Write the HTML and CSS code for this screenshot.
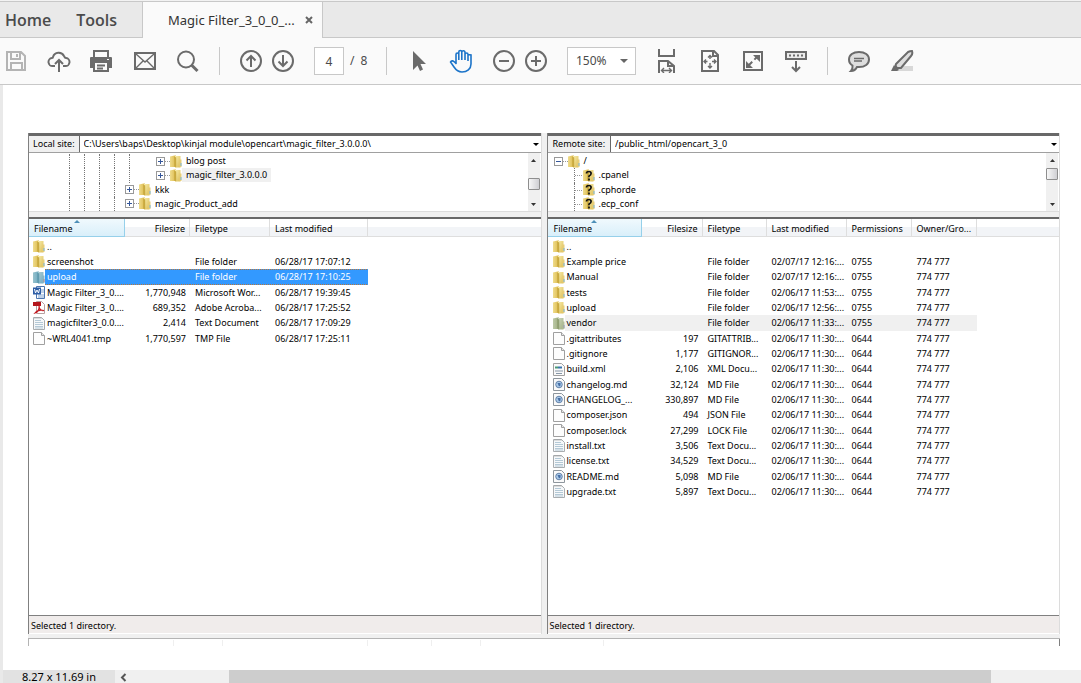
FILE: index.html
```
<!DOCTYPE html>
<html lang="en">
<head>
<meta charset="utf-8">
<title>Magic Filter_3_0_0_...</title>
<link rel="stylesheet" href="styles.css">
</head>
<body>
<svg class="sprite" aria-hidden="true">
  <defs>
    <linearGradient id="gold" x1="0" x2="1" y1="0" y2="1"><stop offset="0" stop-color="#f8edac"/><stop offset="1" stop-color="#dcbd55"/></linearGradient>
    <linearGradient id="goldside" x1="0" x2="1"><stop offset="0" stop-color="#efdc8c"/><stop offset="1" stop-color="#dcb94b"/></linearGradient>
  </defs>
  <symbol id="folder" viewBox="0 0 12 13">
    <path d="M0 1.500 4.500.500h1.500v11.500H0z" fill="url(#goldside)"/>
    <path d="M5 1h5.500v11.500H5z" fill="url(#gold)"/>
    <path d="M4.200 1.500 6.200 2.500v10L4.200 11.500z" fill="#c9a93f"/>
    <path d="M9.500 4.500h2v7.500h-2z" fill="#e6cd78"/>
    <path d="M10.500 8h1v3h-1z" fill="#7bb6d9"/>
  </symbol>
  <symbol id="unknown" viewBox="0 0 12 13">
    <use href="#folder"/>
    <path d="M3.500 4.500q0-2 2.300-2t2.300 2q0 1.300-2.100 2.600V8.300M6 9.500v2" fill="none" stroke="#111" stroke-width="1.700"/>
  </symbol>
  <symbol id="blank" viewBox="0 0 12 13">
    <path d="M.5.5h8l3 3v9H.5z" fill="#fdfdfd" stroke="#a0a0a0"/><path d="M8.500.5v3h3" fill="#e8e8e8" stroke="#a0a0a0"/>
  </symbol>
  <symbol id="text" viewBox="0 0 12 13">
    <path d="M.5.5h8l3 3v9H.5z" fill="#f6f8fa" stroke="#a9adb0"/><path d="M2 3.500h6M2 5.500h8M2 7.500h8M2 9.500h8M2 11h8" stroke="#b4c9d6"/>
    <path d="M2 0v2M4 0v2M6 0v2M8 0v2" stroke="#9a9a9a" stroke-width=".6"/>
  </symbol>
  <symbol id="md" viewBox="0 0 12 13">
    <path d="M.5.5h8l3 3v9H.5z" fill="#fafafa" stroke="#8e969d"/><circle cx="6" cy="6.500" r="3.300" fill="#a9c9e8" stroke="#6583aa"/><path d="M4.500 5h3v2.500l-1.500 1z" fill="#446da5"/>
  </symbol>
  <symbol id="xml" viewBox="0 0 12 13">
    <path d="M.5.5h8l3 3v9H.5z" fill="#fafafa" stroke="#a0a0a0"/><path d="M2 4.500h3" stroke="#4a9a78" stroke-width="2"/><path d="M5 4.500h4" stroke="#3974ad" stroke-width="2"/><path d="M2 8h8M3 10.500h6" stroke="#8797a8"/>
  </symbol>
  <symbol id="word" viewBox="0 0 12 13">
    <path d="M3.500.5h8v12h-8z" fill="#fff" stroke="#4c75ae"/><path d="M8 4h3M8 6h3M5 9h6M5 11h6" stroke="#7fa2d0"/><path d="M0 1.500h8v7H0z" fill="#2f5ea6"/><path d="m1.500 3 1 4L4 4l1.500 3 1-4" stroke="#fff" fill="none"/>
  </symbol>
  <symbol id="pdf" viewBox="0 0 12 13">
    <path d="M3.500.5h5l3 3v9h-8z" fill="#fff" stroke="#b7a0a0"/><path d="M0 1h8v4H0z" fill="#b3151c"/><path d="M2 12c3-1 4.500-4 4-7.500C6 8 8 10 11 9.500 7.500 8.500 4 9.500 2 12z" fill="none" stroke="#c21920" stroke-width="1.200"/>
  </symbol>
</svg>

<header class="tabs">
  <nav class="tabs-main"><button class="tab">Home</button><button class="tab">Tools</button></nav>
  <div class="doc-tab"><span>Magic Filter_3_0_0_...</span>
    <button class="close" aria-label="Close tab"><svg width="8" height="8" viewBox="0 0 8 8"><path d="m1 1 6 6M7 1 1 7" stroke="#666" stroke-width="2"/></svg></button>
  </div>
</header>

<div class="toolbar">
  <button class="tool faded" aria-label="Save"><svg viewBox="0 0 24 24"><path d="M3 3h14l4 4v14H3zM7 3v7h9V3M7 21v-7h11v7M13 5v3"/></svg></button>
  <button class="tool" aria-label="Upload"><svg viewBox="0 0 24 24"><path d="M8 17H6a4 4 0 0 1-1-8c1 0 1-.5 1-1a6 6 0 0 1 11-1c1 1 0 2 2 2a4 4 0 0 1-1 8h-2M12 23V11M8 15l4-4 4 4"/></svg></button>
  <button class="tool" aria-label="Print"><svg viewBox="0 0 24 24"><path d="M4 8V2h14v6"/><path class="fill" d="M0 9q0-1 1-1h20q1 0 1 1v10h-3v-5H3v5H0z"/><path d="M4 13h14v9H4zM7 16.500h8M7 19.500h6" fill="#fafafa"/><path d="M17 10.500h2" stroke="#fafafa" stroke-width="1"/></svg></button>
  <button class="tool" aria-label="Email"><svg viewBox="0 0 24 24"><path d="M2 4h20v16H2z"/><path class="thin" d="m3 5 9 8 9-8M3 19l7-7M21 19l-7-7"/></svg></button>
  <button class="tool" aria-label="Search"><svg viewBox="0 0 24 24"><circle cx="10" cy="10.500" r="8"/><path d="m15.500 16 6 6" stroke-width="3"/></svg></button>
  <span class="sep"></span>
  <div class="pair">
    <button class="tool" aria-label="Previous page"><svg viewBox="0 0 24 24"><circle cx="12" cy="12" r="10"/><path d="M12 18V7M7.500 11.500 12 7l4.500 4.500"/></svg></button>
    <button class="tool" aria-label="Next page"><svg viewBox="0 0 24 24"><circle cx="12" cy="12" r="10"/><path d="M12 6v11M7.500 12.500 12 17l4.500-4.500"/></svg></button>
  </div>
  <div class="pages"><input class="page-no" aria-label="Page number" value="4"><span>/</span><span>8</span></div>
  <span class="sep"></span>
  <button class="tool" aria-label="Select"><svg viewBox="0 0 24 24"><path class="fill" d="M7 2v19l4.500-4.500L14 22l3-1.500-2.500-5.500H20z"/></svg></button>
  <button class="tool active" aria-label="Pan"><svg viewBox="0 0 24 24"><path d="M7 14V5.500q0-1.500 1.300-1.500t1.500 1.500V11M9.800 11V3q0-1.500 1.500-1.500T12.800 3v8M12.800 11V3q0-1.300 1.600-1.300T16 3.500V11M16 11V5.500Q16 4 17.500 4T19 5.500L22 6v9c0 5-4 8-9 8-4 0-6-2-8-5l-3.500-5c1-2 3-1 4 0l2 2M19 5.500V12" stroke-width="1.600"/></svg></button>
  <div class="pair">
    <button class="tool" aria-label="Zoom out"><svg viewBox="0 0 24 24"><circle cx="12" cy="12" r="10"/><path d="M7 12h10"/></svg></button>
    <button class="tool" aria-label="Zoom in"><svg viewBox="0 0 24 24"><circle cx="12" cy="12" r="10"/><path d="M7 12h10M12 7v10"/></svg></button>
  </div>
  <div class="drop zoom"><select aria-label="Zoom"><option>150%</option></select><svg class="caret" viewBox="0 0 8 4"><path d="M0 0h8L4 4z"/></svg></div>
  <button class="tool" aria-label="Fit width"><svg viewBox="0 0 24 24"><path d="M4 0v7h15V0M4 24V12h9l6 5v7M13 12v5h6"/><path class="thin" d="M7 21.500h9M9 19l-2.500 2.500L9 24M14 19l2.500 2.500L14 24"/></svg></button>
  <button class="tool" aria-label="Fit page"><svg viewBox="0 0 24 24"><path d="M4 2h12l4 4v16H4zM15 2v5h5"/><path class="thin" d="M12 7v3M12 14v4M6.500 12.500h3M14 12.500h4M10 8.500l2-2 2 2M10 17l2 2 2-2M8 10.500l-2 2 2 2M16 10.500l2 2-2 2"/></svg></button>
  <button class="tool" aria-label="Full screen"><svg viewBox="0 0 24 24"><path d="M3 3h18v18H3z"/><path d="m7 17 10-10" stroke-dasharray="6 3"/><path class="fill" d="M12 6h7v7zM5 12v7h7z"/></svg></button>
  <button class="tool" aria-label="Reading tools"><svg viewBox="0 0 24 24"><path d="M2 3h20v7H2z" fill="#ececec"/><path d="M5 6.500h14" stroke-dasharray="2 2"/><path d="M12 12v10M8 18l4 4 4-4"/></svg></button>
  <span class="sep"></span>
  <button class="tool" aria-label="Comment"><svg viewBox="0 0 24 24"><path d="M12 3c6 0 10 3 10 7.500S18 18 12 18h-2c-1 2-3 4-6 4q2-2 1.500-5.500C3 15 2 13 2 10.500 2 6 6 3 12 3z" fill="#dedede"/><path class="thin" d="M7 9.500h10M7 12h8"/></svg></button>
  <button class="tool" aria-label="Highlight"><svg viewBox="0 0 24 24"><path d="M8 17h15v5H4z" style="fill:#d8d8d8;stroke:none"/><path d="M6 15 18 3q2-1 4-1 1 3-1 5L11 19H7q-2-2-1-4z" fill="#dedede"/><path class="fill" d="m4 16 5 5-2 1H1z"/></svg></button>
</div>

<main class="document">
  <div class="panes">
    <section class="pane">
      <div class="site"><label for="local">Local site:</label><div class="drop"><select id="local"><option>C:\Users\baps\Desktop\kinjal module\opencart\magic_filter_3.0.0.0\</option></select><svg class="caret" viewBox="0 0 8 4"><path d="M0 0h8L4 4z"/></svg></div></div>
      <div class="tree">
        <ul class="nodes local">
          <li><i></i><i></i><i></i><i></i><i></i><i class="none"></i><button class="expand plus" aria-label="Expand"></button><b></b><svg class="icon"><use href="#folder"/></svg><span>blog post</span></li>
          <li><i></i><i></i><i></i><i></i><i></i><i class="none"></i><button class="expand plus" aria-label="Expand"></button><b></b><svg class="icon"><use href="#folder"/></svg><span class="current">magic_filter_3.0.0.0</span></li>
          <li><i></i><i></i><i></i><i></i><button class="expand plus" aria-label="Expand"></button><b></b><svg class="icon"><use href="#folder"/></svg><span>kkk</span></li>
          <li><i></i><i></i><i></i><i></i><button class="expand plus" aria-label="Expand"></button><b></b><svg class="icon"><use href="#folder"/></svg><span>magic_Product_add</span></li>
        </ul>
        <div class="scroll"><svg viewBox="0 0 5 3"><path d="M0 3h5L2.500 0z"/></svg><span class="thumb mid"></span><svg viewBox="0 0 5 3"><path d="M0 0h5L2.500 3z"/></svg></div>
      </div>
      <div class="list">
        <table>
          <colgroup><col class="w96"><col class="w65"><col class="w80"><col class="w98"><col></colgroup>
          <thead><tr><th class="sorted">Filename</th><th class="num">Filesize</th><th>Filetype</th><th>Last modified</th><th></th></tr></thead>
          <tbody>
            <tr><td><div class="name"><svg class="icon"><use href="#folder"/></svg><span>..</span></div></td><td></td><td></td><td></td><td></td></tr>
            <tr><td><div class="name"><svg class="icon"><use href="#folder"/></svg><span>screenshot</span></div></td><td></td><td>File folder</td><td>06/28/17 17:07:12</td><td></td></tr>
            <tr class="selected"><td><div class="name"><svg class="icon"><use href="#folder"/></svg><span>upload</span></div></td><td></td><td>File folder</td><td>06/28/17 17:10:25</td><td></td></tr>
            <tr><td><div class="name"><svg class="icon"><use href="#word"/></svg><span>Magic Filter_3_0....</span></div></td><td class="num">1,770,948</td><td>Microsoft Wor...</td><td>06/28/17 19:39:45</td><td></td></tr>
            <tr><td><div class="name"><svg class="icon"><use href="#pdf"/></svg><span>Magic Filter_3_0....</span></div></td><td class="num">689,352</td><td>Adobe Acroba...</td><td>06/28/17 17:25:52</td><td></td></tr>
            <tr><td><div class="name"><svg class="icon"><use href="#text"/></svg><span>magicfilter3_0.0....</span></div></td><td class="num">2,414</td><td>Text Document</td><td>06/28/17 17:09:29</td><td></td></tr>
            <tr><td><div class="name"><svg class="icon"><use href="#blank"/></svg><span>~WRL4041.tmp</span></div></td><td class="num">1,770,597</td><td>TMP File</td><td>06/28/17 17:25:11</td><td></td></tr>
          </tbody>
        </table>
      </div>
      <footer class="status">Selected 1 directory.</footer>
    </section>

    <section class="pane server">
      <div class="site"><label for="remote">Remote site:</label><div class="drop"><select id="remote"><option>/public_html/opencart_3_0</option></select><svg class="caret" viewBox="0 0 8 4"><path d="M0 0h8L4 4z"/></svg></div></div>
      <div class="tree">
        <ul class="nodes remote">
          <li class="root"><button class="expand" aria-label="Collapse"></button><b></b><svg class="icon"><use href="#folder"/></svg><span>/</span></li>
          <li><i class="branch"></i><svg class="icon"><use href="#unknown"/></svg><span>.cpanel</span></li>
          <li><i class="branch"></i><svg class="icon"><use href="#unknown"/></svg><span>.cphorde</span></li>
          <li><i class="branch"></i><svg class="icon"><use href="#unknown"/></svg><span>.ecp_conf</span></li>
        </ul>
        <div class="scroll"><svg viewBox="0 0 5 3"><path d="M0 3h5L2.500 0z"/></svg><span class="thumb"></span><svg viewBox="0 0 5 3"><path d="M0 0h5L2.500 3z"/></svg></div>
      </div>
      <div class="list">
        <table>
          <colgroup><col class="w94"><col class="w61"><col class="w64"><col class="w80"><col class="w65"><col class="w65"><col></colgroup>
          <thead><tr><th class="sorted">Filename</th><th class="num">Filesize</th><th>Filetype</th><th>Last modified</th><th>Permissions</th><th>Owner/Gro...</th><th></th></tr></thead>
          <tbody>
            <tr><td><div class="name"><svg class="icon"><use href="#folder"/></svg><span>..</span></div></td><td></td><td></td><td></td><td></td><td></td><td></td></tr>
            <tr><td><div class="name"><svg class="icon"><use href="#folder"/></svg><span>Example price</span></div></td><td></td><td>File folder</td><td>02/07/17 12:16:...</td><td>0755</td><td>774 777</td><td></td></tr>
            <tr><td><div class="name"><svg class="icon"><use href="#folder"/></svg><span>Manual</span></div></td><td></td><td>File folder</td><td>02/07/17 12:16:...</td><td>0755</td><td>774 777</td><td></td></tr>
            <tr><td><div class="name"><svg class="icon"><use href="#folder"/></svg><span>tests</span></div></td><td></td><td>File folder</td><td>02/06/17 11:53:...</td><td>0755</td><td>774 777</td><td></td></tr>
            <tr><td><div class="name"><svg class="icon"><use href="#folder"/></svg><span>upload</span></div></td><td></td><td>File folder</td><td>02/06/17 12:56:...</td><td>0755</td><td>774 777</td><td></td></tr>
            <tr class="inactive"><td><div class="name"><svg class="icon"><use href="#folder"/></svg><span>vendor</span></div></td><td></td><td>File folder</td><td>02/06/17 11:33:...</td><td>0755</td><td>774 777</td><td></td></tr>
            <tr><td><div class="name"><svg class="icon"><use href="#blank"/></svg><span>.gitattributes</span></div></td><td class="num">197</td><td>GITATTRIB...</td><td>02/06/17 11:30:...</td><td>0644</td><td>774 777</td><td></td></tr>
            <tr><td><div class="name"><svg class="icon"><use href="#blank"/></svg><span>.gitignore</span></div></td><td class="num">1,177</td><td>GITIGNOR...</td><td>02/06/17 11:30:...</td><td>0644</td><td>774 777</td><td></td></tr>
            <tr><td><div class="name"><svg class="icon"><use href="#xml"/></svg><span>build.xml</span></div></td><td class="num">2,106</td><td>XML Docu...</td><td>02/06/17 11:30:...</td><td>0644</td><td>774 777</td><td></td></tr>
            <tr><td><div class="name"><svg class="icon"><use href="#md"/></svg><span>changelog.md</span></div></td><td class="num">32,124</td><td>MD File</td><td>02/06/17 11:30:...</td><td>0644</td><td>774 777</td><td></td></tr>
            <tr><td><div class="name"><svg class="icon"><use href="#md"/></svg><span>CHANGELOG_...</span></div></td><td class="num">330,897</td><td>MD File</td><td>02/06/17 11:30:...</td><td>0644</td><td>774 777</td><td></td></tr>
            <tr><td><div class="name"><svg class="icon"><use href="#blank"/></svg><span>composer.json</span></div></td><td class="num">494</td><td>JSON File</td><td>02/06/17 11:30:...</td><td>0644</td><td>774 777</td><td></td></tr>
            <tr><td><div class="name"><svg class="icon"><use href="#blank"/></svg><span>composer.lock</span></div></td><td class="num">27,299</td><td>LOCK File</td><td>02/06/17 11:30:...</td><td>0644</td><td>774 777</td><td></td></tr>
            <tr><td><div class="name"><svg class="icon"><use href="#text"/></svg><span>install.txt</span></div></td><td class="num">3,506</td><td>Text Docu...</td><td>02/06/17 11:30:...</td><td>0644</td><td>774 777</td><td></td></tr>
            <tr><td><div class="name"><svg class="icon"><use href="#text"/></svg><span>license.txt</span></div></td><td class="num">34,529</td><td>Text Docu...</td><td>02/06/17 11:30:...</td><td>0644</td><td>774 777</td><td></td></tr>
            <tr><td><div class="name"><svg class="icon"><use href="#md"/></svg><span>README.md</span></div></td><td class="num">5,098</td><td>MD File</td><td>02/06/17 11:30:...</td><td>0644</td><td>774 777</td><td></td></tr>
            <tr><td><div class="name"><svg class="icon"><use href="#text"/></svg><span>upgrade.txt</span></div></td><td class="num">5,897</td><td>Text Docu...</td><td>02/06/17 11:30:...</td><td>0644</td><td>774 777</td><td></td></tr>
          </tbody>
        </table>
      </div>
      <footer class="status">Selected 1 directory.</footer>
    </section>
  </div>
  <div class="queue"><span class="q145"></span><span class="q49"></span><span class="q145"></span><span class="q64"></span><span class="q49"></span><span class="q123"></span></div>
</main>

<footer class="bottom">
  <span class="size">8.27 x 11.69 in</span>
  <button class="left" aria-label="Scroll left"><svg width="7" height="9" viewBox="0 0 7 9"><path d="M5.500 1 2 4.500 5.500 8" fill="none" stroke="#555" stroke-width="2"/></svg></button>
  <span class="track"><span class="bar"></span></span>
</footer>
</body>
</html>
```
FILE: styles.css
```
* { box-sizing: border-box; }
body {
  margin: 0;
  min-height: 100vh;
  display: flex;
  flex-direction: column;
  background: #fff;
  color: #000;
  font: 9px/14px "Noto Sans", "Open Sans", sans-serif;
}
button, select, input { font: inherit; color: inherit; margin: 0; padding: 0; border: 0; background: none; border-radius: 0; }
select { appearance: none; }
.sprite { position: absolute; width: 0; height: 0; }

.tabs { display: flex; height: 38px; border-top: 1px solid #f2f2f2; background: #e9e9e9; box-shadow: inset 0 1px #c8c8c8, inset 0 -1px #c8c8c8; }
.tabs-main { display: flex; gap: 25px; width: 142px; padding-left: 5px; }
.tab { font: 600 16px/36px "Open Sans", sans-serif; color: #4b4b4b; }
.doc-tab { display: flex; align-items: center; justify-content: space-between; width: 181px; padding: 0 9px 0 25px; margin-top: 1px; background: #fafafa; border: solid #c8c8c8; border-width: 0 1px; font-size: 13px; color: #333; white-space: nowrap; }
.close { display: flex; }

.toolbar { display: flex; align-items: center; gap: 19px; height: 47px; padding: 0 4px; background: #fafafa; border-bottom: 1px solid #c8c8c8; color: #4b4b4b; }
.tool { flex: none; display: block; width: 24px; height: 24px; color: #6b6b6b; }
.tool svg { display: block; width: 24px; height: 24px; fill: none; stroke: currentColor; stroke-width: 2; }
.tool .fill { fill: currentColor; stroke: none; }
.tool .thin { stroke-width: 1.4; }
.tool.faded { color: #b4b4b4; }
.tool.active { color: #1c74c9; }
.sep { flex: none; width: 1px; height: 28px; background: #c8c8c8; }
.pair { display: flex; gap: 8px; }
.pages { display: flex; align-items: center; gap: 6px; width: 53px; font-size: 12px; }
.page-no { width: 30px; height: 28px; flex: none; border: 1px solid #c8c8c8; background: #fff; text-align: center; }
.drop { position: relative; flex: 1; display: flex; align-items: center; }
.drop select { width: 100%; height: 100%; }
.caret { position: absolute; right: 2px; width: 6px; height: 3px; pointer-events: none; }
.zoom { flex: none; width: 69px; height: 28px; border: 1px solid #c8c8c8; background: #fff; font-size: 12px; }
.zoom select { padding-left: 8px; }
.zoom .caret { right: 7px; width: 8px; height: 4px; fill: #666; }

.document { flex: 1; display: flex; flex-direction: column; padding: 48px 21px 24px 25px; border-left: 3px solid #e9e9e9; }
.panes { flex: 1; display: grid; grid-template-columns: 1fr 1fr; gap: 5px; background: #f0f0f0; }
.pane { display: flex; flex-direction: column; min-width: 0; border: solid #808080; border-width: 0 1px 0 1px; border-right-color: #dcdcdc; }
.site { display: flex; height: 20px; border-top: 3px solid #686868; border-bottom: 1px solid #a0a0a0; background: #fff; }
.site label { padding: 0 4px; line-height: 16px; background: #f0f0f0; border-right: 1px solid #686868; }
.site select { padding-left: 4px; }
.server .site label { padding: 0 5px; }
.tree { display: flex; height: 59px; background: #fff; border-bottom: 1px solid #dcdcdc; }
.nodes { flex: 1; margin: 0; padding: 1px 0 0; list-style: none; display: flex; flex-direction: column; }
.nodes.local { padding-left: 40px; }
.nodes.remote { padding-left: 26px; }
.nodes li { flex: 1; display: flex; align-items: center; white-space: nowrap; }
.nodes i { width: 15px; align-self: stretch; border-left: 1px dotted #777; }
.nodes i.none { width: 16px; border: 0; }
.nodes .branch { width: 9px; background: linear-gradient(90deg, #999 50%, transparent 50%) 0 7px / 2px 1px repeat-x; }
.nodes .root { margin-left: -20px; }
.root .expand { margin-left: 0; }
.nodes b { width: 5px; border-top: 1px dotted #999; }
.nodes span { padding: 0 4px; line-height: 14px; }
.nodes .current { background: #f0f0f0; }
.expand { width: 9px; height: 9px; margin-left: -4px; border: 1px solid #999; background: linear-gradient(#35579a, #35579a) center / 5px 1px no-repeat #fff; }
.expand.plus { background: linear-gradient(#35579a, #35579a) center / 5px 1px no-repeat, linear-gradient(#35579a, #35579a) center / 1px 5px no-repeat #fff; }
.icon { flex: none; width: 12px; height: 13px; display: block; }
.scroll { display: flex; flex-direction: column; align-items: center; width: 12px; padding: 6px 0 5px; margin-right: 1px; background: #f0f0f0; }
.scroll svg { width: 5px; height: 3px; fill: #333; }
.scroll svg:last-child { margin-top: auto; }
.thumb { width: 12px; height: 12px; margin-top: 6px; border: 1px solid #8e8e8e; border-radius: 1px; background: linear-gradient(90deg, #f7f7f7, #cfcfd3); }
.thumb.mid { margin-top: 16px; }

.list { flex: 1; margin-top: 5px; background: #fff; border-top: 2px solid #686868; }
table { width: 100%; table-layout: fixed; border-collapse: separate; border-spacing: 0; }
th, td { padding: 0 0 0 5px; text-align: left; font-weight: 400; white-space: nowrap; line-height: 14px; }
th { height: 18px; padding-top: 2px; border: solid #dedede; border-width: 0 1px 1px 0; background: linear-gradient(#fff 50%, #f2f4f7 50%); }
th:last-child { border-right: 0; }
th.sorted { position: relative; background: linear-gradient(#f0f9fd, #d9effa); border-color: #96d0ea; }
th.sorted::after { content: ""; position: absolute; top: 1px; left: 50%; margin-left: -3px; border: 3px solid transparent; border-top: 0; border-bottom-color: #4d8fb8; }
.num { padding-left: 0; padding-right: 4px; text-align: right; }
tbody tr { height: 15px; }
tbody tr:nth-child(3n) { height: 16px; }
tbody::before { content: ""; display: block; height: 2px; }
td:first-child { padding-left: 4px; }
.name { display: flex; align-items: center; }
.name span { flex: 1; padding-left: 2px; }
.server th:first-child { padding-left: 6px; }
.server td:first-child { padding-left: 5px; }
.selected { color: #fff; }
.selected .name span, .selected td:nth-child(n+2):nth-child(-n+4) {
  background:
    repeating-linear-gradient(90deg, #b8763a 0 1px, #3399ff 1px 2px) top / 100% 1px no-repeat,
    repeating-linear-gradient(90deg, #b8763a 0 1px, #3399ff 1px 2px) bottom / 100% 1px no-repeat,
    #3399ff;
}
.selected .name span, .inactive .name span { line-height: 16px; }
.selected .icon { filter: hue-rotate(140deg) saturate(0.6) brightness(0.85); }
.inactive .name span, .inactive td:nth-child(n+2):nth-child(-n+6) { background: #f0f0f0; }
.inactive .icon { filter: hue-rotate(30deg) saturate(0.4) brightness(0.9); }
.w96 { width: 96px; } .w65 { width: 65px; } .w80 { width: 80px; } .w98 { width: 98px; }
.w94 { width: 94px; } .w61 { width: 61px; } .w64 { width: 64px; }
.status { height: 19px; padding: 2px; line-height: 16px; border-top: 1px solid #808080; border-bottom: 1px solid #fff; background: #f0eceb; }
.queue { display: flex; height: 12px; border-top: 4px solid #f0f0f0; box-shadow: inset 0 1px #b4b4b4, inset 1px 0 #b4b4b4, inset -1px 0 #808080; padding: 2px 0 0 1px; }
.queue span { border-right: 1px solid #efefef; }
.q145 { width: 145px; } .q49 { width: 49px; } .q64 { width: 64px; } .q123 { width: 123px; }

.bottom { display: flex; height: 13px; overflow: hidden; border-left: 3px solid #e9e9e9; background: #f0f0f0; font-size: 11px; }
.size { flex: none; width: 112px; text-align: center; line-height: 14px; background: #e2e2e2; }
.left { flex: none; display: flex; padding: 3px 5px 0; width: 114px; }
.track { flex: 1; display: flex; }
.bar { flex: 0 1 762px; margin-right: 90px; background: #cdcdcd; }
```
